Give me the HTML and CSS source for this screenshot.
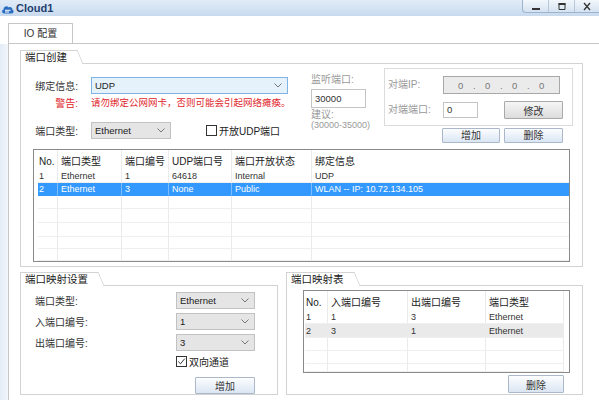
FILE: index.html
```html
<!DOCTYPE html>
<html lang="zh-CN">
<head>
    <meta charset="UTF-8">
    <title>Cloud1</title>
    <link rel="stylesheet" href="styles.css">
</head>
<body>
    <div class="titlebar">
        <svg class="app-icon" viewBox="0 0 13 11" width="13" height="11">
            <path d="M3 10.5 C0.6 10.5 0.4 7 2.6 6.6 C2.4 3.4 6.2 2.2 7.6 4.4 C9.2 3.2 11.8 4.4 11.4 6.8 C13.2 7.2 12.8 10.5 10.8 10.5 Z" fill="#2c6fc2"/>
            <path d="M4 7.3 H9.5 M4 9 H8" stroke="#fff" stroke-width="1"/>
        </svg>
        <span class="title">Cloud1</span>
        <div class="win-btns">
            <span class="wb">
                <svg viewBox="0 0 10 10" width="10" height="10"><rect x="1" y="7" width="8" height="2" fill="#333"/></svg>
            </span>
            <span class="wb">
                <svg viewBox="0 0 10 10" width="10" height="10"><path d="M2 2.5 H8 V8.5 H2 Z" fill="none" stroke="#333"/><rect x="1.5" y="2" width="7" height="2" fill="#333"/></svg>
            </span>
            <span class="wb last">
                <svg viewBox="0 0 10 10" width="10" height="10"><path d="M2 2 L8 9 M8 2 L2 9" stroke="#333" stroke-width="1.3"/></svg>
            </span>
        </div>
    </div>

    <div class="tabs">
        <div class="tab">IO 配置</div>
    </div>

    <div class="frame">
        <div class="side"></div>
        <div class="panel">

            <!-- 端口创建 -->
            <div class="group g-create">
                <div class="group-title">端口创建</div>
                <div class="group-box">
                    <div class="create-top">
                        <div class="bind-col">
                            <div class="row r1">
                                <span class="lbl">绑定信息:</span>
                                <div class="select sel-blue w-bind">UDP
                                    <svg class="chev" viewBox="0 0 8 5" width="8" height="5"><path d="M0.5 0.5 L4 4 L7.5 0.5" fill="none" stroke="#777"/></svg>
                                </div>
                            </div>
                            <div class="row r2">
                                <span class="lbl warn">警告:</span>
                                <span class="warn warn-text">请勿绑定公网网卡，否则可能会引起网络瘫痪。</span>
                            </div>
                            <div class="row r3">
                                <span class="lbl">端口类型:</span>
                                <div class="select sel-gray w-type">Ethernet
                                    <svg class="chev" viewBox="0 0 8 5" width="8" height="5"><path d="M0.5 0.5 L4 4 L7.5 0.5" fill="none" stroke="#777"/></svg>
                                </div>
                                <span class="check udp-check"><span class="box"></span>开放UDP端口</span>
                            </div>
                        </div>

                        <div class="listen-col">
                            <div class="dim">监听端口:</div>
                            <div class="input listen-input">30000</div>
                            <div class="hint">建议:</div>
                            <div class="hint small">(30000-35000)</div>
                        </div>

                        <div class="peer-col">
                            <div class="peer-box">
                                <div class="peer-row">
                                    <span class="dim peer-lbl">对端IP:</span>
                                    <div class="ip-field">
                                        <span>0</span><span>.</span><span>0</span><span>.</span><span>0</span><span>.</span><span>0</span>
                                    </div>
                                </div>
                                <div class="peer-row second">
                                    <span class="dim peer-lbl">对端端口:</span>
                                    <div class="input port-input">0</div>
                                    <button class="btn btn-gray modify">修改</button>
                                </div>
                            </div>
                            <div class="btn-row">
                                <button class="btn w-add">增加</button>
                                <button class="btn w-del">删除</button>
                            </div>
                        </div>
                    </div>

                    <div class="grid grid-ports">
                        <table class="tbl">
                            <colgroup>
                                <col style="width:20px"><col style="width:64px"><col style="width:47px">
                                <col style="width:63px"><col style="width:80px"><col style="width:257px">
                            </colgroup>
                            <tr class="head"><th>No.</th><th>端口类型</th><th>端口编号</th><th>UDP端口号</th><th>端口开放状态</th><th>绑定信息</th></tr>
                            <tr class="h14"><td>1</td><td>Ethernet</td><td>1</td><td>64618</td><td>Internal</td><td>UDP</td></tr>
                            <tr class="h13 sel"><td>2</td><td>Ethernet</td><td>3</td><td>None</td><td>Public</td><td>WLAN -- IP: 10.72.134.105</td></tr>
                            <tr class="h13"><td></td><td></td><td></td><td></td><td></td><td></td></tr>
                            <tr class="h14"><td></td><td></td><td></td><td></td><td></td><td></td></tr>
                            <tr class="h14"><td></td><td></td><td></td><td></td><td></td><td></td></tr>
                            <tr class="h12"><td></td><td></td><td></td><td></td><td></td><td></td></tr>
                            <tr class="h12"><td></td><td></td><td></td><td></td><td></td><td></td></tr>
                        </table>
                    </div>
                </div>
            </div>

            <div class="bottom-row">
                <!-- 端口映射设置 -->
                <div class="group g-map-set">
                    <div class="group-title">端口映射设置</div>
                    <div class="group-box map-set-box">
                        <div class="map-form">
                            <span class="map-lbl">端口类型:</span>
                            <div class="select sel-gray">Ethernet
                                <svg class="chev" viewBox="0 0 8 5" width="8" height="5"><path d="M0.5 0.5 L4 4 L7.5 0.5" fill="none" stroke="#777"/></svg>
                            </div>
                            <span class="map-lbl">入端口编号:</span>
                            <div class="select sel-gray">1
                                <svg class="chev" viewBox="0 0 8 5" width="8" height="5"><path d="M0.5 0.5 L4 4 L7.5 0.5" fill="none" stroke="#777"/></svg>
                            </div>
                            <span class="map-lbl">出端口编号:</span>
                            <div class="select sel-gray">3
                                <svg class="chev" viewBox="0 0 8 5" width="8" height="5"><path d="M0.5 0.5 L4 4 L7.5 0.5" fill="none" stroke="#777"/></svg>
                            </div>
                            <span></span>
                            <span class="check two-way">
                                <span class="box">
                                    <svg viewBox="0 0 11 11" width="9" height="9"><path d="M1.5 5.5 L4.3 8.3 L9.5 2" fill="none" stroke="#333" stroke-width="1.2"/></svg>
                                </span>双向通道
                            </span>
                            <span></span>
                            <button class="btn map-add">增加</button>
                        </div>
                    </div>
                </div>

                <!-- 端口映射表 -->
                <div class="group g-map-tab">
                    <div class="group-title">端口映射表</div>
                    <div class="group-box">
                        <div class="grid grid-map">
                            <table class="tbl">
                                <colgroup>
                                    <col style="width:23px"><col style="width:80px"><col style="width:78px"><col style="width:78px">
                                </colgroup>
                                <tr class="head h20"><th>No.</th><th>入端口编号</th><th>出端口编号</th><th>端口类型</th></tr>
                                <tr class="h13"><td>1</td><td>1</td><td>3</td><td>Ethernet</td></tr>
                                <tr class="h14 dim-sel"><td>2</td><td>3</td><td>1</td><td>Ethernet</td></tr>
                                <tr class="h13"><td></td><td></td><td></td><td></td></tr>
                                <tr class="h13"><td></td><td></td><td></td><td></td></tr>
                                <tr class="h8"><td></td><td></td><td></td><td></td></tr>
                            </table>
                        </div>
                        <div class="map-actions">
                            <button class="btn map-del">删除</button>
                        </div>
                    </div>
                </div>
            </div>

        </div>
    </div>
</body>
</html>
```

FILE: styles.css
```css
* {
    margin: 0;
    padding: 0;
    box-sizing: border-box;
}

body {
    font-family: "Liberation Sans", "Noto Sans CJK SC", sans-serif;
    font-size: 10px;
    color: #333;
    background-color: #fff;
    width: 599px;
    height: 400px;
    overflow: hidden;
}

/* title bar */
.titlebar {
    height: 16px;
    display: flex;
    align-items: flex-start;
    background-image: linear-gradient(#e2ecf8, #c8daee);
}

.app-icon {
    margin: 3px 2px 0 1px;
}

.title {
    font-size: 11px;
    font-weight: bold;
    color: #1d3f6e;
    line-height: 16px;
}

.win-btns {
    margin-left: auto;
    display: flex;
    height: 13px;
    border-left: 1px solid #9db4cf;
    border-bottom: 1px solid #9db4cf;
    border-bottom-left-radius: 4px;
    background-image: linear-gradient(#f3f7fc, #d5e2f1);
}

.wb {
    width: 26px;
    display: flex;
    align-items: center;
    justify-content: center;
    border-right: 1px solid #b7c8dc;
}

.wb.last {
    width: 24px;
    border-right: none;
}

/* tab strip */
.tabs {
    margin: 7px 0 0 8px;
    height: 21px;
    border-bottom: 1px solid #c6c6c6;
}

.tab {
    width: 65px;
    height: 20px;
    border: 1px solid #c6c6c6;
    border-bottom: none;
    text-align: center;
    line-height: 19px;
    color: #333;
}

.frame {
    display: flex;
    height: 356px;
}

.side {
    width: 8px;
    background-image: linear-gradient(to right, #e3ecf7, #f2f6fb);
}

.panel {
    flex: 1;
    border-left: 1px solid #c6c6c6;
    padding: 6px 0 0 11px;
}

/* group boxes */
.group {
    display: flex;
    flex-direction: column;
    align-items: flex-start;
}

.group-title {
    position: relative;
    z-index: 1;
    height: 14px;
    padding: 0 10px 0 4px;
    margin-bottom: -1px;
    border-top: 1px solid #d3d3d3;
    border-left: 1px solid #d3d3d3;
    background-color: #fff;
    font-size: 10.5px;
    line-height: 13px;
    color: #222;
}

.group-title::after {
    content: "";
    position: absolute;
    left: 100%;
    top: -1px;
    width: 6px;
    height: 14px;
    background-image: linear-gradient(to top right, #fff calc(50% - 0.7px), #d3d3d3 50%, rgba(255, 255, 255, 0) calc(50% + 0.7px));
}

.group-box {
    align-self: stretch;
    border: 1px solid #d3d3d3;
    background-color: #fff;
}

.g-create {
    width: 563px;
}

.create-top {
    display: flex;
    height: 79px;
}

.bind-col {
    width: 290px;
    padding-top: 13px;
}

.row {
    display: flex;
    align-items: center;
}

.r1 {
    height: 17px;
}

.r2 {
    height: 14px;
    margin-top: 1px;
}

.r3 {
    height: 17px;
    margin-top: 13px;
}

.lbl {
    width: 57px;
    margin-right: 13px;
    text-align: right;
    color: #333;
}

.warn {
    color: #e0262c;
}

.warn-text {
    font-size: 9.5px;
}

.select {
    display: flex;
    align-items: center;
    height: 17px;
    padding-left: 3px;
    font-size: 9.5px;
    color: #222;
}

.chev {
    margin-left: auto;
    margin-right: 5px;
}

.sel-blue {
    background-color: #e5f1fb;
    border: 1px solid #7fb3e6;
}

.sel-gray {
    background-color: #e5e5e5;
    border: 1px solid #c2c2c2;
}

.w-bind {
    width: 197px;
}

.w-type {
    width: 80px;
}

.check {
    display: flex;
    align-items: center;
    color: #222;
}

.check .box {
    width: 11px;
    height: 11px;
    margin-right: 2px;
    border: 1px solid #333;
    background-color: #fff;
    display: flex;
    align-items: center;
    justify-content: center;
}

.udp-check {
    margin-left: 35px;
}

.listen-col {
    width: 73px;
    padding-top: 10px;
}

.dim {
    color: #999;
    line-height: 12px;
}

.input {
    background-color: #fff;
    border: 1px solid #c4c4c4;
    padding-left: 3px;
    font-size: 9.5px;
    color: #333;
}

.listen-input {
    width: 55px;
    height: 19px;
    margin-top: 3px;
    line-height: 17px;
}

.hint {
    color: #999;
    line-height: 10px;
    margin-top: 2px;
}

.hint.small {
    font-size: 9px;
    margin-top: 0;
}

.peer-col {
    width: 189px;
    padding-top: 4px;
}

.peer-box {
    height: 58px;
    border: 1px solid #dcdcdc;
    padding: 7px 0 0 3px;
}

.peer-row {
    display: flex;
    align-items: center;
    height: 18px;
}

.peer-row.second {
    margin-top: 7px;
}

.peer-lbl {
    width: 55px;
}

.ip-field {
    display: flex;
    width: 117px;
    height: 18px;
    padding-left: 10px;
    align-items: center;
    background-color: #ebebeb;
    border: 1px solid #a8a8a8;
    color: #777;
    font-size: 9.5px;
}

.ip-field span {
    width: 13.5px;
    text-align: center;
}

.port-input {
    width: 35px;
    height: 16px;
    line-height: 14px;
}

.btn {
    font-family: inherit;
    font-size: 10px;
    color: #333;
    border: 1px solid #aab8c9;
    border-radius: 1px;
    background-image: linear-gradient(#fcfdff, #dbe6f3);
}

.btn-gray {
    border-color: #a9a9a9;
    background-image: linear-gradient(#f6f6f6, #dcdcdc);
}

.modify {
    width: 59px;
    height: 18px;
    margin-left: 26px;
}

.btn-row {
    display: flex;
    gap: 4px;
    margin: 2px 0 0 58px;
}

.btn-row .btn {
    height: 15px;
    line-height: 12px;
}

.w-add {
    width: 58px;
}

.w-del {
    width: 59px;
}

/* list grids */
.grid {
    border: 1px solid #8a8a8a;
    overflow: hidden;
    background-color: #fff;
}

.grid-ports {
    width: 537px;
    height: 113px;
    margin: 6px 0 4px 12px;
    padding-left: 4px;
}

.tbl {
    border-collapse: separate;
    border-spacing: 0;
    table-layout: fixed;
}

.tbl th,
.tbl td {
    padding: 0 0 0 3px;
    text-align: left;
    font-weight: normal;
    white-space: nowrap;
    overflow: hidden;
    border-right: 1px solid #ebebeb;
    border-bottom: 1px solid #efefef;
    font-size: 9px;
    line-height: 10px;
}

.tbl th {
    font-size: 10px;
    color: #222;
    border-bottom: none;
    padding-top: 4px;
}

.tbl th:first-child,
.tbl td:first-child {
    padding-left: 1px;
}

.grid-ports .tbl th:last-child,
.grid-ports .tbl td:last-child {
    border-right: none;
}

.tbl .head {
    height: 19px;
}

.tbl .h20 {
    height: 20px;
}

.tbl .h14 {
    height: 14px;
}

.tbl .h13 {
    height: 13px;
}

.tbl .h12 {
    height: 12px;
}

.tbl .h8 {
    height: 8px;
}

.tbl .sel td {
    background-color: #3399ff;
    color: #fff;
    border-right-color: #7cbcff;
    border-bottom-color: #3399ff;
}

.tbl .dim-sel td {
    background-color: #eaeaea;
}

/* bottom groups */
.bottom-row {
    display: flex;
    gap: 8px;
    margin-top: 5px;
}

.g-map-set {
    width: 258px;
}

.g-map-tab {
    width: 297px;
}

.map-set-box {
    padding: 6px 0 1px 14px;
}

.map-form {
    display: grid;
    grid-template-columns: 141px 79px;
    grid-auto-rows: 17px;
    row-gap: 4px;
    align-items: center;
}

.map-lbl {
    color: #333;
}

.two-way {
    height: 12px;
    margin-top: -4px;
}

.map-add {
    width: 60px;
    height: 17px;
    margin-left: 19px;
    margin-top: 2px;
}

.grid-map {
    width: 267px;
    height: 83px;
    margin: 4px 0 0 16px;
    padding-left: 1px;
}

.map-actions {
    display: flex;
    justify-content: flex-end;
    padding: 2px 18px 1px 0;
}

.map-del {
    width: 56px;
    height: 18px;
}
```
